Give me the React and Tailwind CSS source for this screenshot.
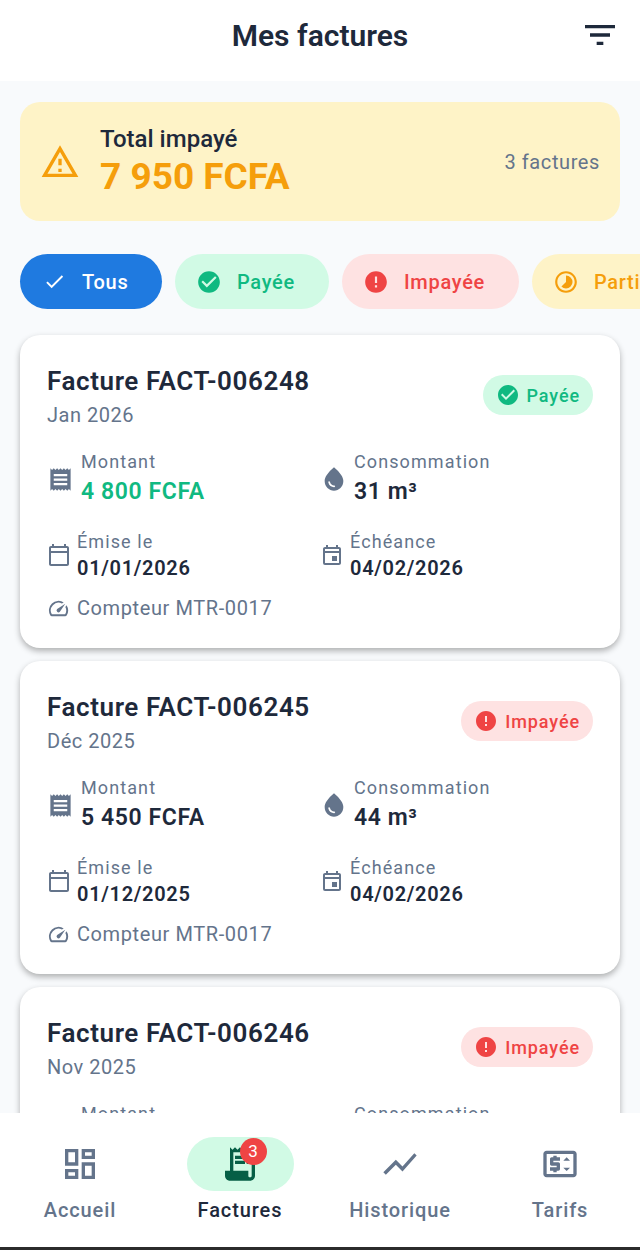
import React from 'react';
import {
  MdFilterList,
  MdOutlineWarningAmber,
  MdCheck,
  MdCheckCircle,
  MdError,
  MdOutlineTimelapse,
  MdReceipt,
  MdWaterDrop,
  MdOutlineCalendarToday,
  MdOutlineEvent,
  MdOutlineSpeed,
  MdOutlineDashboard,
  MdReceiptLong,
  MdShowChart,
  MdOutlinePriceChange,
} from 'react-icons/md';

const invoices = [
  { id: 'FACT-006248', period: 'Jan 2026', amount: '4 800 FCFA', paid: true, volume: '31 m³', issued: '01/01/2026', due: '04/02/2026' },
  { id: 'FACT-006245', period: 'Déc 2025', amount: '5 450 FCFA', paid: false, volume: '44 m³', issued: '01/12/2025', due: '04/02/2026' },
  { id: 'FACT-006246', period: 'Nov 2025', amount: '2 500 FCFA', paid: false, volume: '20 m³', issued: '01/11/2025', due: '04/02/2026' },
];

const navItems = [
  { name: 'Accueil', icon: MdOutlineDashboard },
  { name: 'Factures', icon: MdReceiptLong, active: true, badge: 3 },
  { name: 'Historique', icon: MdShowChart },
  { name: 'Tarifs', icon: MdOutlinePriceChange },
];

const InvoiceCard = ({ invoice }) => (
  <div className="bg-white rounded-[20px] shadow-[0_3px_6px_rgba(0,0,0,0.3)] px-[27px] pt-[28px] h-[313px] shrink-0">
    <div className="flex justify-between">
      <div>
        <h2 className="text-[26px] leading-[37px] font-semibold text-[#1e293b] tracking-[0.6px]">Facture {invoice.id}</h2>
        <p className="text-[20px] leading-[28px] text-[#64748b] tracking-[0.5px] mt-[1px]">{invoice.period}</p>
      </div>
      {invoice.paid ? (
        <div className="flex items-center gap-[7px] h-[40px] mt-[12px] pl-[13px] pr-[13px] rounded-full bg-[#d1fae5] text-[#10b981]">
          <MdCheckCircle className="text-[24px]" />
          <span className="text-[18px] font-medium tracking-[0.9px]">Payée</span>
        </div>
      ) : (
        <div className="flex items-center gap-[7px] h-[40px] mt-[12px] pl-[13px] pr-[13px] rounded-full bg-[#fee2e2] text-[#ef4444]">
          <MdError className="text-[24px]" />
          <span className="text-[18px] font-medium tracking-[0.9px]">Impayée</span>
        </div>
      )}
    </div>

    <div className="grid grid-cols-2 mt-[20px]">
      <div className="flex items-center gap-[7px]">
        <MdReceipt className="text-[27px] text-[#64748b]" />
        <div>
          <p className="text-[18px] leading-[26px] text-[#64748b] tracking-[1.1px]">Montant</p>
          <p className={`text-[23px] leading-[34px] font-semibold tracking-[0.6px] ${invoice.paid ? 'text-[#10b981]' : 'text-[#1e293b]'}`}>{invoice.amount}</p>
        </div>
      </div>
      <div className="flex items-center gap-[6px]">
        <MdWaterDrop className="text-[28px] text-[#64748b]" />
        <div>
          <p className="text-[18px] leading-[26px] text-[#64748b] tracking-[1.1px]">Consommation</p>
          <p className="text-[23px] leading-[34px] font-semibold text-[#1e293b] tracking-[0.6px]">{invoice.volume}</p>
        </div>
      </div>
    </div>

    <div className="grid grid-cols-2 mt-[20px]">
      <div className="flex items-center gap-[6px]">
        <MdOutlineCalendarToday className="text-[24px] text-[#64748b]" />
        <div>
          <p className="text-[18px] leading-[26px] text-[#64748b] tracking-[1.1px]">Émise le</p>
          <p className="text-[20px] leading-[26px] font-semibold text-[#1e293b] tracking-[0.7px]">{invoice.issued}</p>
        </div>
      </div>
      <div className="flex items-center gap-[6px]">
        <MdOutlineEvent className="text-[24px] text-[#64748b]" />
        <div>
          <p className="text-[18px] leading-[26px] text-[#64748b] tracking-[1.1px]">Échéance</p>
          <p className="text-[20px] leading-[26px] font-semibold text-[#1e293b] tracking-[0.7px]">{invoice.due}</p>
        </div>
      </div>
    </div>

    <div className="flex items-center gap-[7px] mt-[13px]">
      <MdOutlineSpeed className="text-[23px] text-[#64748b]" />
      <span className="text-[20px] leading-[28px] text-[#64748b] tracking-[0.6px]">Compteur MTR-0017</span>
    </div>
  </div>
);

const App = () => {
  return (
    <div className="w-[640px] h-[1250px] flex flex-col overflow-hidden bg-[#f8fafc] font-['Roboto',sans-serif]">
      {/* Header */}
      <header className="h-[81px] shrink-0 bg-white flex items-center justify-center relative">
        <h1 className="text-[30px] font-semibold text-[#1e293b] mb-[10px]">Mes factures</h1>
        <MdFilterList className="absolute right-[20px] top-[15px] text-[40px] text-[#1e293b]" />
      </header>

      {/* Content */}
      <main className="flex-1 min-h-0 overflow-hidden pt-[21px]">
        <div className="mx-[20px] h-[119px] rounded-[20px] bg-[#fef3c7] flex items-center pl-[20px] pr-[20px]">
          <MdOutlineWarningAmber className="text-[40px] text-[#f59e0b]" />
          <div className="ml-[20px] flex-1">
            <p className="text-[24px] leading-[30px] font-medium text-[#1e293b]">Total impayé</p>
            <p className="text-[37px] leading-[46px] font-bold text-[#f59e0b]">7 950 FCFA</p>
          </div>
          <span className="text-[20px] text-[#64748b] tracking-[0.6px]">3 factures</span>
        </div>

        {/* Filters */}
        <div className="flex gap-[13px] mt-[33px] pl-[20px] overflow-hidden">
          <div className="flex items-center h-[55px] shrink-0 w-[142px] pl-[23px] rounded-full bg-[#1f7ae0] text-white">
            <MdCheck className="text-[23px]" />
            <span className="ml-[16px] text-[20px] font-medium tracking-[0.7px]">Tous</span>
          </div>
          <div className="flex items-center h-[55px] shrink-0 w-[154px] pl-[21px] rounded-full bg-[#d1fae5] text-[#10b981]">
            <MdCheckCircle className="text-[26px]" />
            <span className="ml-[15px] text-[20px] font-medium tracking-[0.7px]">Payée</span>
          </div>
          <div className="flex items-center h-[55px] shrink-0 w-[177px] pl-[21px] rounded-full bg-[#fee2e2] text-[#ef4444]">
            <MdError className="text-[26px]" />
            <span className="ml-[15px] text-[20px] font-medium tracking-[0.7px]">Impayée</span>
          </div>
          <div className="flex items-center h-[55px] shrink-0 w-[170px] pl-[21px] rounded-full bg-[#fef3c7] text-[#f59e0b]">
            <MdOutlineTimelapse className="text-[26px]" />
            <span className="ml-[15px] text-[20px] font-medium tracking-[0.7px]">Partielle</span>
          </div>
        </div>

        {/* Invoices */}
        <div className="flex flex-col gap-[13px] mt-[26px] mx-[20px]">
          {invoices.map((invoice) => (
            <InvoiceCard key={invoice.id} invoice={invoice} />
          ))}
        </div>
      </main>

      {/* Bottom navigation */}
      <nav className="h-[134px] shrink-0 bg-white grid grid-cols-4 relative">
        {navItems.map((item) => {
          const Icon = item.icon;
          return (
            <div key={item.name} className="flex flex-col items-center pt-[24px]">
              <div className={`relative w-[107px] h-[54px] rounded-full flex items-center justify-center ${item.active ? 'bg-[#d1fae5] text-[#065f46]' : 'text-[#64748b]'}`}>
                <Icon className="text-[40px]" />
                {item.badge && (
                  <span className="absolute left-[53px] top-[1px] w-[27px] h-[27px] rounded-full bg-[#ef4444] text-white text-[17px] flex items-center justify-center">
                    {item.badge}
                  </span>
                )}
              </div>
              <span className={`mt-[4px] text-[20px] font-medium tracking-[0.9px] ${item.active ? 'text-[#1e293b]' : 'text-[#64748b]'}`}>{item.name}</span>
            </div>
          );
        })}
      </nav>
      <div className="h-[3px] shrink-0 bg-[#2b2b2b]" />
    </div>
  );
};

export default App;
